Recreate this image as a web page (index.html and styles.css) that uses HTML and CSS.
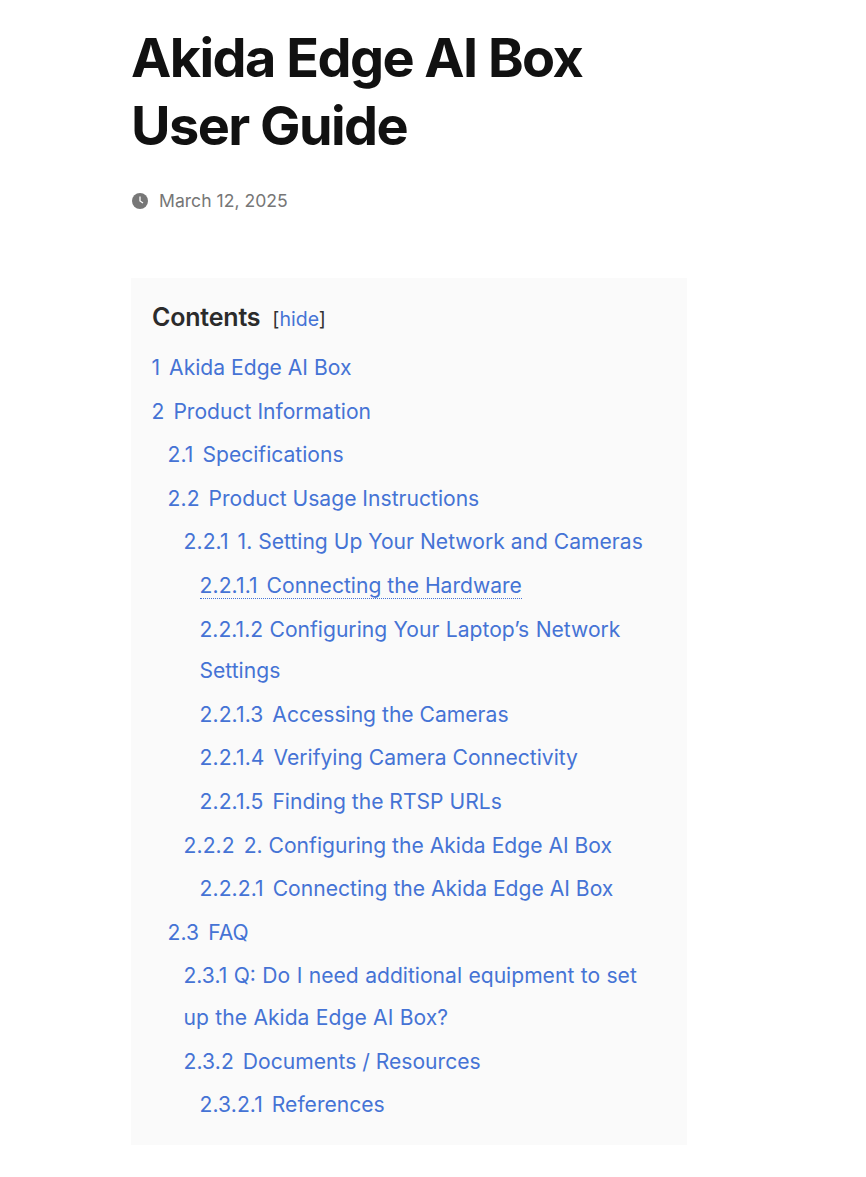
FILE: index.html
```html
<!DOCTYPE html>
<html lang="en">
<head>
<meta charset="utf-8">
<title>Akida Edge AI Box User Guide</title>
<link rel="stylesheet" href="styles.css">
</head>
<body>
<main class="page">
  <h1 class="title">Akida Edge AI Box User Guide</h1>
  <div class="meta">
    <svg class="clock" viewBox="0 0 16 16" width="16" height="16"><circle cx="8" cy="8" r="8" fill="#777"/><path d="M8 3.5V8l3 2" fill="none" stroke="#fff" stroke-width="1.3"/></svg>
    <span>March 12, 2025</span>
  </div>
  <nav class="toc">
    <div class="toc-head"><span class="toc-title">Contents</span><span class="toc-toggle">[<a href="#">hide</a>]</span></div>
    <ul class="list">
      <li><a href="#"><span class="num">1</span> Akida Edge AI Box</a></li>
      <li><a href="#"><span class="num">2</span> Product Information</a>
        <ul class="list sub">
          <li><a href="#"><span class="num">2.1</span> Specifications</a></li>
          <li><a href="#"><span class="num">2.2</span> Product Usage Instructions</a>
            <ul class="list sub">
              <li><a href="#"><span class="num">2.2.1</span> 1. Setting Up Your Network and Cameras</a>
                <ul class="list sub">
                  <li><a href="#" class="active"><span class="num">2.2.1.1</span> Connecting the Hardware</a></li>
                  <li><a href="#" class="wrapped">2.2.1.2 Configuring Your Laptop’s Network Settings</a></li>
                  <li><a href="#"><span class="num">2.2.1.3</span> Accessing the Cameras</a></li>
                  <li><a href="#"><span class="num">2.2.1.4</span> Verifying Camera Connectivity</a></li>
                  <li><a href="#"><span class="num">2.2.1.5</span> Finding the RTSP URLs</a></li>
                </ul>
              </li>
              <li><a href="#"><span class="num">2.2.2</span> 2. Configuring the Akida Edge AI Box</a>
                <ul class="list sub">
                  <li><a href="#"><span class="num">2.2.2.1</span> Connecting the Akida Edge AI Box</a></li>
                </ul>
              </li>
            </ul>
          </li>
          <li><a href="#"><span class="num">2.3</span> FAQ</a>
            <ul class="list sub">
              <li><a href="#" class="wrapped">2.3.1 Q: Do I need additional equipment to set up the Akida Edge AI Box?</a></li>
              <li><a href="#"><span class="num">2.3.2</span> Documents / Resources</a>
                <ul class="list sub">
                  <li><a href="#"><span class="num">2.3.2.1</span> References</a></li>
                </ul>
              </li>
            </ul>
          </li>
        </ul>
      </li>
    </ul>
  </nav>
</main>
</body>
</html>
```
FILE: styles.css
```css
* { box-sizing: border-box; }
html, body { margin: 0; padding: 0; background: #fff; }
body { font-family: Inter, "Liberation Sans", sans-serif; color: #111; }
.page { width: 556px; margin-left: 131px; padding-top: 24px; }
.title { margin: 0; font-size: 54px; line-height: 68px; font-weight: 700; letter-spacing: -1.55px; color: #111; }
.meta { display: flex; align-items: center; gap: 11px; margin-top: 28px; padding-left: 1px; height: 24px; font-size: 17.6px; color: #767676; }
.clock { margin-top: 2px; }
.toc { margin-top: 66px; padding: 20px 20px 19px 20.5px; background: #fafafa; }
.toc-head { display: flex; align-items: baseline; gap: 12px; height: 39px; line-height: 39px; margin-bottom: 10px; }
.toc-title { font-size: 25px; font-weight: 600; color: #2b2b2b; letter-spacing: -0.2px; padding-left: 0.5px; }
.toc-toggle { font-size: 19.5px; color: #333; }
.toc-toggle a { color: #4573d5; text-decoration: none; }
.list { list-style: none; margin: 0; padding: 0; }
.sub { padding-left: 16px; }
.list li { font-size: 21.1px; line-height: 41.6px; }
.list > li { margin-top: 2px; }
.list a { color: #4573d5; text-decoration: none; }
.list a.active { border-bottom: 1px dotted #4573d5; }
.list a.wrapped { word-spacing: 0.5px; }
.num { margin-right: 3px; letter-spacing: 0.1px; }
```
